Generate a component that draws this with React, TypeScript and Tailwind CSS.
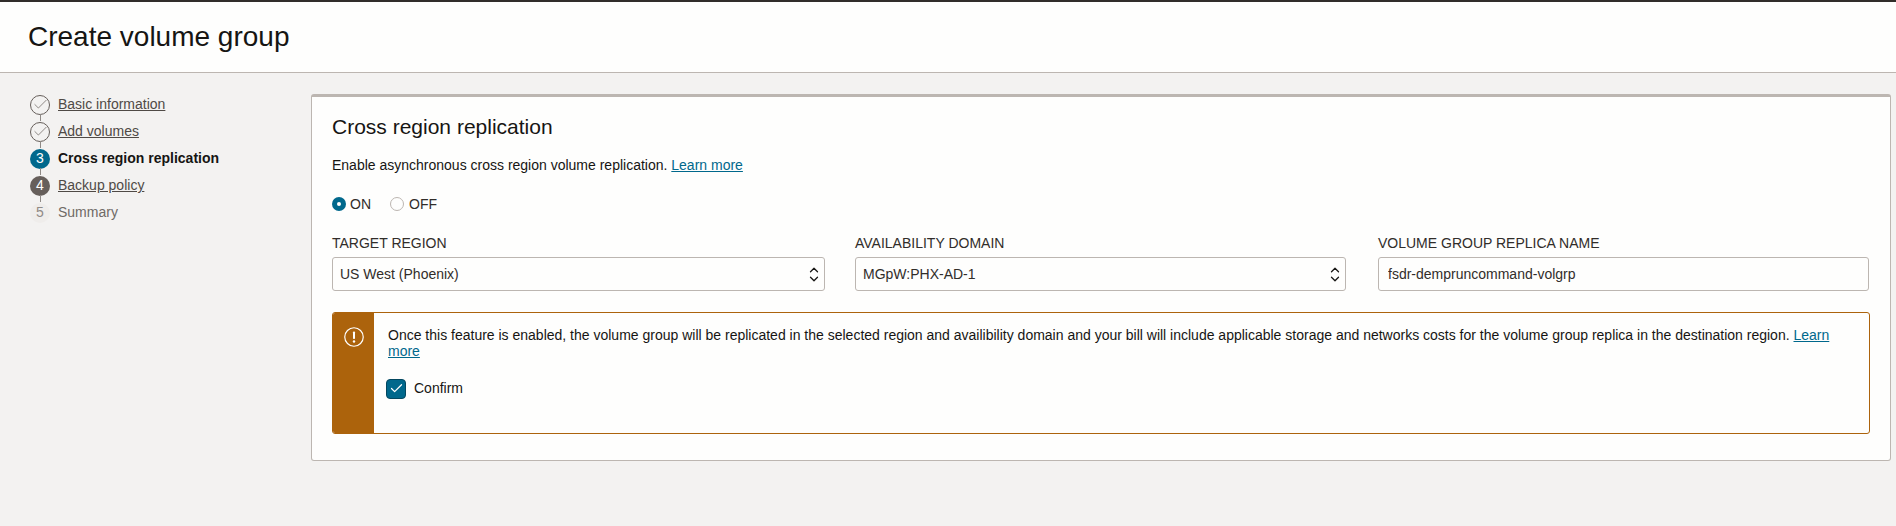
import { Check, ChevronDown, ChevronUp } from 'lucide-react';

const steps = [
  { label: 'Basic information', state: 'done' },
  { label: 'Add volumes', state: 'done' },
  { label: 'Cross region replication', state: 'current', num: 3 },
  { label: 'Backup policy', state: 'next', num: 4 },
  { label: 'Summary', state: 'disabled', num: 5 },
];

function StepBadge({ state, num }: { state: string; num?: number }) {
  if (state === 'done') {
    return (
      <span className="flex size-[20px] items-center justify-center rounded-full border border-[#665f5b] bg-[#f3f2f1]">
        <Check size={17} strokeWidth={1} className="text-[#665f5b]" />
      </span>
    );
  }
  if (state === 'current') {
    return <span className="flex size-[20px] items-center justify-center rounded-full bg-[#00688c] text-[14px] text-white">{num}</span>;
  }
  if (state === 'next') {
    return <span className="flex size-[20px] items-center justify-center rounded-full bg-[#665f5b] text-[14px] text-white">{num}</span>;
  }
  return <span className="flex size-[20px] items-center justify-center rounded-full bg-[#efedeb] text-[14px] text-[#8f8a86]">{num}</span>;
}

function Stepper() {
  return (
    <div className="flex w-[311px] shrink-0 flex-col pl-[30px] pt-[18px]">
      {steps.map((step, i) => (
        <div key={step.label} className="relative flex h-[27px] items-center gap-[8px]">
          {i < steps.length - 1 && <span className="absolute left-[10px] top-[23px] h-[7px] w-px bg-[#8f8a86]" />}
          <StepBadge state={step.state} num={step.num} />
          {step.state === 'current' && <span className="text-[14px] font-bold text-[#161513]">{step.label}</span>}
          {step.state === 'disabled' && <span className="text-[14px] text-[#6f6a66]">{step.label}</span>}
          {(step.state === 'done' || step.state === 'next') && <a className="text-[14px] text-[#4f4a46] underline">{step.label}</a>}
        </div>
      ))}
    </div>
  );
}

function SelectField({ label, value }: { label: string; value: string }) {
  return (
    <div>
      <div className="mb-[6px] h-[16px] text-[14px] leading-[16px] text-[#312d2a]">{label}</div>
      <div className="flex h-[34px] items-center justify-between rounded-[3px] border border-[#bcb6b1] bg-[#fefefd] pl-[7px] pr-[3px] text-[14px] text-[#312d2a]">
        <span>{value}</span>
        <span className="flex flex-col text-[#161513]">
          <ChevronUp size={14} strokeWidth={2.2} className="-mb-[5px]" />
          <ChevronDown size={14} strokeWidth={2.2} />
        </span>
      </div>
    </div>
  );
}

export default function App() {
  return (
    <div className="flex h-[526px] flex-col bg-[#f3f2f1] font-['Liberation_Sans',Arial,sans-serif]">
      <header className="flex h-[73px] items-center border-t-2 border-b border-t-[#312d2a] border-b-[#bcb6b1] bg-[#fefefd] pl-[28px]">
        <h1 className="text-[28px] leading-none text-[#161513]">Create volume group</h1>
      </header>

      <div className="flex flex-1 items-start">
        <Stepper />

        <main className="mt-[21px] h-[367px] w-[1580px] rounded-[3px] border border-t-[3px] border-[#bcb6b1] bg-[#fefefd] pl-[20px] pr-[20px] pt-[18px]">
          <h2 className="h-[24px] text-[21px] leading-[24px] text-[#161513]">Cross region replication</h2>

          <p className="mt-[18px] h-[16px] text-[14px] leading-[16px] text-[#161513]">
            Enable asynchronous cross region volume replication. <a className="text-[#00688c] underline">Learn more</a>
          </p>

          <div className="mt-[23px] flex h-[16px] items-center text-[14px] text-[#312d2a]">
            <span className="flex size-[14px] items-center justify-center rounded-full bg-[#00688c]">
              <span className="size-[4px] rounded-full bg-white" />
            </span>
            <span className="ml-[4px]">ON</span>
            <span className="ml-[19px] size-[14px] rounded-full border border-[#bcb6b1] bg-[#fefefd]" />
            <span className="ml-[5px]">OFF</span>
          </div>

          <div className="mt-[23px] grid grid-cols-[493px_493px_491px] gap-[30px]">
            <SelectField label="TARGET REGION" value="US West (Phoenix)" />
            <div className="pr-[2px]">
              <SelectField label="AVAILABILITY DOMAIN" value="MGpW:PHX-AD-1" />
            </div>
            <div>
              <div className="mb-[6px] h-[16px] text-[14px] leading-[16px] text-[#312d2a]">VOLUME GROUP REPLICA NAME</div>
              <input
                readOnly
                value="fsdr-demprunCommand-volgrp"
                className="block h-[34px] w-full rounded-[3px] border border-[#bcb6b1] bg-[#fefefd] px-[9px] text-[14px] lowercase text-[#312d2a] outline-none"
              />
            </div>
          </div>

          <div className="mt-[21px] flex h-[122px] overflow-hidden rounded-[3px] border border-[#ac630c]">
            <div className="flex w-[41px] shrink-0 justify-center bg-[#ac630c] pt-[14px]">
              <svg width="20" height="20" viewBox="0 0 20 20" fill="none">
                <circle cx="10" cy="10" r="9.25" stroke="#fff" strokeWidth="1.2" />
                <rect x="9" y="4.5" width="2" height="7.5" rx="0.8" fill="#fff" />
                <circle cx="10" cy="14.5" r="1.2" fill="#fff" />
              </svg>
            </div>
            <div className="flex-1 pl-[14px] pr-[30px] pt-[14px]">
              <p className="text-[14px] leading-[16px] text-[#161513]">
                Once this feature is enabled, the volume group will be replicated in the selected region and availibility domain and your bill will include applicable storage and networks costs for the volume group replica in the destination region.{' '}
                <a className="text-[#00688c] underline">Learn more</a>
              </p>
              <div className="mt-[19px] flex items-center gap-[8px]">
                <span className="-ml-[2px] flex size-[20px] items-center justify-center rounded-[4px] border border-[#04475f] bg-[#00688c]">
                  <Check size={15} strokeWidth={2} className="text-white" />
                </span>
                <span className="text-[14px] text-[#161513]">Confirm</span>
              </div>
            </div>
          </div>
        </main>
      </div>
    </div>
  );
}
